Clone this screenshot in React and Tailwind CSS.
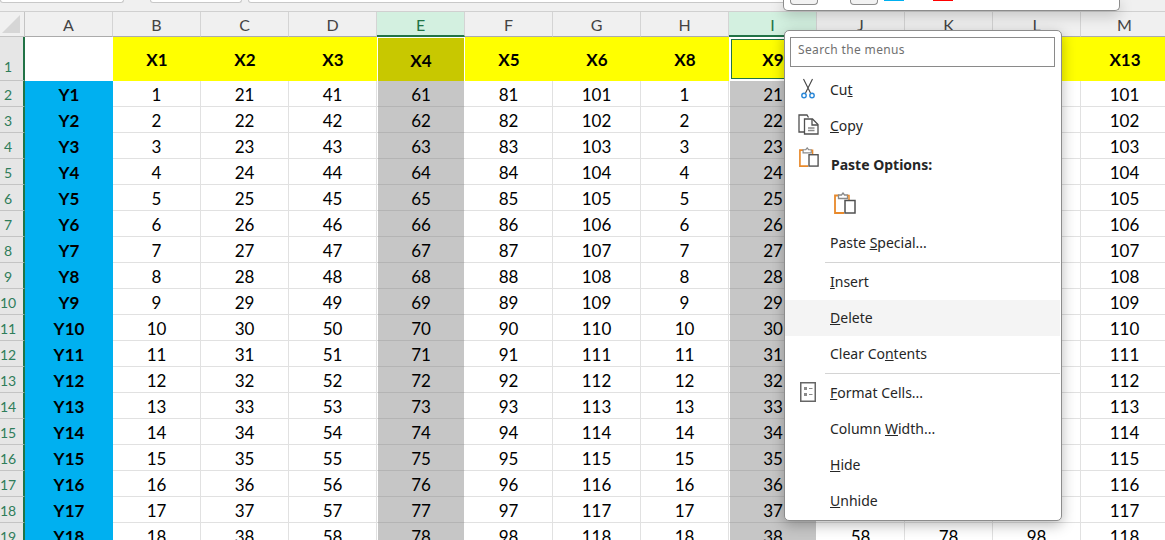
import { Fragment } from "react"

const columns = ["A", "B", "C", "D", "E", "F", "G", "H", "I", "J", "K", "L", "M"]
const headers = ["X1", "X2", "X3", "X4", "X5", "X6", "X8", "X9", "X10", "X11", "X12", "X13"]
const starts = [1, 21, 41, 61, 81, 101, 1, 21, 41, 61, 81, 101]
const rowNumbers = Array.from({ length: 18 }, (_, i) => i + 2)

function ScissorsIcon() {
  return (
    <svg width="18" height="22" viewBox="0 0 18 22" fill="none">
      <path d="M4.5 1 L11.5 15 M13.5 1 L6.5 15" stroke="#444" strokeWidth="1.1" />
      <circle cx="5" cy="17.5" r="2.2" stroke="#2b88d8" strokeWidth="1.4" />
      <circle cx="13" cy="17.5" r="2.2" stroke="#2b88d8" strokeWidth="1.4" />
    </svg>
  )
}

function CopyIcon() {
  return (
    <svg width="21" height="21" viewBox="0 0 21 21" fill="none" stroke="#505050" strokeWidth="1.3">
      <path d="M7 18 H1 V1 H9 L10.5 3.5" />
      <path d="M6.5 5 H14.5 L20 10.5 V20 H6.5 Z" fill="#fff" />
      <path d="M14 5 V11 H20" />
      <path d="M10 14 H16.5 M10 16.5 H16.5" stroke="#8a8a8a" />
    </svg>
  )
}

function PasteIcon({ size = 22 }) {
  return (
    <svg width={size} height={size} viewBox="0 0 22 22" fill="none">
      <path d="M5 3.5 H1 V21 H10" stroke="#e8892b" strokeWidth="1.8" />
      <path d="M4.5 6.5 V3 H7.5 L9 1 L10.5 3 H13.5 V6.5 Z" fill="#fff" stroke="#8a8a8a" strokeWidth="1.3" />
      <path d="M13.5 3.5 H15 V8" stroke="#e8892b" strokeWidth="1.5" />
      <rect x="11" y="8.5" width="10" height="12.5" fill="#fff" stroke="#505050" strokeWidth="1.5" />
    </svg>
  )
}

function FormatIcon() {
  return (
    <svg width="16" height="20" viewBox="0 0 16 20" fill="none">
      <rect x="0.75" y="0.75" width="14.5" height="18.5" fill="#fff" stroke="#666" strokeWidth="1.5" />
      <rect x="4" y="5" width="3" height="3" fill="#8a8a8a" />
      <rect x="4" y="11" width="3" height="3" fill="#8a8a8a" />
      <path d="M9 6.5 H12.5 M9 12.5 H12.5" stroke="#8a8a8a" strokeWidth="1.2" />
    </svg>
  )
}

function MenuItem({ icon, hover, children }) {
  return (
    <div className={`flex h-9 items-center ${hover ? "bg-[#f4f4f4]" : ""}`}>
      <div className="flex w-[45px] shrink-0 justify-center pb-[3px] pl-[1px]">{icon}</div>
      <span className="pb-[2px] text-[14px] text-[#262626]">{children}</span>
    </div>
  )
}

function Separator() {
  return <div className="my-px ml-[40px] h-px bg-[#d4d4d4]" />
}

function ContextMenu() {
  return (
    <div className="absolute left-[784px] top-[30px] flex h-[491px] w-[278px] flex-col rounded-[5px] border border-[#8c8c8c] bg-white pr-px font-['Noto_Sans',sans-serif] shadow-[0_4px_14px_rgba(0,0,0,0.28)]">
      <div className="mx-[5px] mt-[6px] flex h-[30px] items-center border border-[#8a8a8a] pb-[5px] pl-[7px] text-[12px] tracking-[0.35px] text-[#6f6f6f]">
        Search the menus
      </div>
      <div className="mt-[5px]">
        <MenuItem icon={<ScissorsIcon />}>Cu<u>t</u></MenuItem>
        <MenuItem icon={<CopyIcon />}><u>C</u>opy</MenuItem>
      </div>
      <div className="mt-[2px] flex h-9 items-center">
        <div className="flex w-[45px] shrink-0 justify-center pb-[14px] pl-[3px]"><PasteIcon size={20} /></div>
        <span className="pl-[1px] text-[14px] font-bold text-[#262626]">Paste Options:</span>
      </div>
      <div className="mt-[3px] flex h-9 items-center pl-[49px]"><PasteIcon /></div>
      <div className="mt-[4px]">
        <MenuItem>Paste <u>S</u>pecial...</MenuItem>
      </div>
      <Separator />
      <MenuItem><u>I</u>nsert</MenuItem>
      <MenuItem hover><u>D</u>elete</MenuItem>
      <MenuItem>Clear Co<u>n</u>tents</MenuItem>
      <Separator />
      <MenuItem icon={<FormatIcon />}><u>F</u>ormat Cells...</MenuItem>
      <MenuItem>Column <u>W</u>idth...</MenuItem>
      <MenuItem><u>H</u>ide</MenuItem>
      <MenuItem><u>U</u>nhide</MenuItem>
    </div>
  )
}

function MiniToolbar() {
  return (
    <div className="absolute left-[783px] top-0 flex h-[11px] w-[337px] items-start rounded-b-[5px] border border-t-0 border-[#8c8c8c] bg-white pl-[6px] shadow-[0_4px_14px_rgba(0,0,0,0.22)]">
      <div className="h-[5px] w-[28px] rounded-b-[4px] border border-t-0 border-[#8c8c8c] bg-[#f2f2f2]" />
      <div className="ml-[32px] h-[5px] w-[28px] rounded-b-[4px] border border-t-0 border-[#8c8c8c] bg-[#f2f2f2]" />
      <div className="ml-[6px] h-px w-[20px] bg-[#00b0f0]" />
      <div className="ml-[29px] h-px w-[20px] bg-[#ff0000]" />
    </div>
  )
}

function ColumnHeader({ name }) {
  const selected = name === "E" || name === "I"
  return (
    <div
      className={`flex h-[25px] items-center justify-center border-r border-[#d4d4d4] pt-[2px] text-[16px] ${
        selected
          ? "border-b-2 border-b-[#217346] bg-[#d3f0e0] text-[#217346]"
          : "border-b border-b-[#ababab] text-[#444]"
      }`}
    >
      {name}
    </div>
  )
}

function RowHeader({ children, tall }) {
  return (
    <div
      className={`flex justify-center border-r-2 border-b border-r-[#217346] border-b-[#c4c4c4] bg-[#e6e6e6] pr-[7px] text-[14px] leading-none text-[#2f7d5a] ${
        tall ? "h-11 items-end pb-[6px]" : "h-[26px] items-center pt-[2px]"
      }`}
    >
      {children}
    </div>
  )
}

function NumberCell({ value, selected }) {
  return (
    <div
      className={`flex h-[26px] items-center justify-center border-b border-r pt-[2px] text-[17px] text-black ${
        selected
          ? "border-x border-x-white border-b-[#b4b4b4] bg-[#c6c6c6]"
          : "border-[#e1e1e1] bg-white"
      }`}
    >
      {value}
    </div>
  )
}

function HeaderCell({ label }) {
  let tone = "bg-[#ffff00]"
  if (label === "X4") tone = "border-x border-t border-white bg-[#c8c800]"
  if (label === "X9") tone = "border-2 border-white bg-[#ffff00] outline outline-[#217346] outline-offset-[-3px]"
  return (
    <div className={`flex h-11 items-center justify-center pt-[2px] text-[17px] font-bold text-black ${tone}`}>
      {label}
    </div>
  )
}

export default function App() {
  return (
    <div className="relative h-[540px] w-[1165px] overflow-hidden bg-[#f0f0f0] font-['Lato',sans-serif]">
      <div className="flex h-[12px] gap-[6px] border-b border-[#d0d0d0]">
        <div className="h-[3px] w-[124px] rounded-b-[4px] border border-t-0 border-[#c8c8c8] bg-white" />
        <div className="ml-[20px] h-[3px] w-[92px] rounded-b-[4px] border border-t-0 border-[#c8c8c8] bg-white" />
        <div className="h-[3px] w-[540px] rounded-b-[4px] border border-t-0 border-[#c8c8c8] bg-white" />
      </div>

      <div className="grid grid-cols-[25px_repeat(13,88px)]">
        <div className="flex h-[25px] items-center justify-center border-r border-b border-[#c4c4c4] pr-[2px]">
          <svg width="20" height="20" viewBox="0 0 20 20">
            <path d="M19 1 V19 H1 Z" fill="#d6d6d6" />
          </svg>
        </div>
        {columns.map((name) => (
          <ColumnHeader key={name} name={name} />
        ))}

        <RowHeader tall>1</RowHeader>
        <div className="h-11 bg-white" />
        {headers.map((label) => (
          <HeaderCell key={label} label={label} />
        ))}

        {rowNumbers.map((row) => (
          <Fragment key={row}>
            <RowHeader>{row}</RowHeader>
            <div className="flex h-[26px] items-center justify-center bg-[#00b0f0] pt-[2px] text-[17px] font-bold text-black">
              Y{row - 1}
            </div>
            {starts.map((start, i) => (
              <NumberCell key={i} value={start + row - 2} selected={i === 3 || i === 7} />
            ))}
          </Fragment>
        ))}
      </div>

      <MiniToolbar />
      <ContextMenu />
    </div>
  )
}
